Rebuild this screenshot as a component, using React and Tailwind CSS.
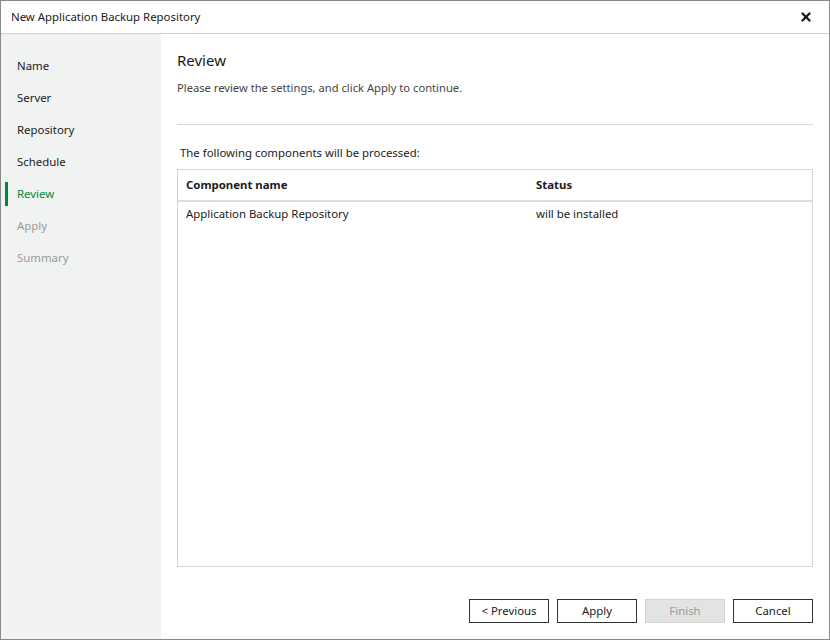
import { X } from 'lucide-react';

const steps = [
  { label: 'Name', state: 'done' },
  { label: 'Server', state: 'done' },
  { label: 'Repository', state: 'done' },
  { label: 'Schedule', state: 'done' },
  { label: 'Review', state: 'active' },
  { label: 'Apply', state: 'disabled' },
  { label: 'Summary', state: 'disabled' },
];

const font = { fontFamily: '"Segoe UI", "Noto Sans", "Liberation Sans", sans-serif' };

function Step({ label, state }) {
  const color =
    state === 'active' ? 'text-[#00873e]' : state === 'disabled' ? 'text-[#9a9a9a]' : 'text-[#1a1a1a]';
  return (
    <div className="relative h-8 flex items-center pl-4">
      {state === 'active' && <div className="absolute left-1 top-1 w-[3px] h-6 bg-[#00873e]" />}
      <span className={`text-[11.4px] ${color}`}>{label}</span>
    </div>
  );
}

function Button({ children, disabled }) {
  return (
    <button
      className={
        disabled
          ? 'w-20 h-6 border border-[#d4d4d4] bg-[#e3e3e3] text-[#9a9a9a] text-[11.4px]'
          : 'w-20 h-6 border border-[#333] bg-white text-[#1a1a1a] text-[11.4px]'
      }
    >
      {children}
    </button>
  );
}

export default function App() {
  return (
    <div className="w-[830px] h-[640px] border border-[#8a8a8a] bg-white flex flex-col text-[#1a1a1a]" style={font}>
      <div className="h-[33px] flex items-center justify-between px-2.5 border-b border-[#cfcfcf] shrink-0">
        <span className="text-[11.4px]">New Application Backup Repository</span>
        <X className="w-3.5 h-3.5 mr-1.5" strokeWidth={4} />
      </div>
      <div className="flex flex-1 min-h-0">
        <div className="w-40 bg-[#f1f3f3] pt-[16px]">
          {steps.map((s) => (
            <Step key={s.label} {...s} />
          ))}
        </div>
        <div className="flex-1 flex flex-col pl-4 pr-4 pt-[16px] pb-4">
          <h1 className="text-[15px] leading-5">Review</h1>
          <p className="text-[11.2px] text-[#444] mt-[10px]">Please review the settings, and click Apply to continue.</p>
          <div className="border-t border-[#d9d9d9] mt-[27px]" />
          <p className="text-[11.4px] mt-[19px] pl-[3px]">The following components will be processed:</p>
          <div className="mt-[8px] border border-[#d4d4d4] flex-1 flex flex-col">
            <div className="h-[32px] flex items-center border-b-2 border-[#dcdcdc] text-[11.4px] font-bold">
              <div className="w-[358px] pl-2">Component name</div>
              <div>Status</div>
            </div>
            <div className="h-6 flex items-center text-[11.4px]">
              <div className="w-[358px] pl-2">Application Backup Repository</div>
              <div>will be installed</div>
            </div>
          </div>
          <div className="flex justify-end gap-2 mt-8">
            <Button>&lt; Previous</Button>
            <Button>Apply</Button>
            <Button disabled>Finish</Button>
            <Button>Cancel</Button>
          </div>
        </div>
      </div>
    </div>
  );
}
